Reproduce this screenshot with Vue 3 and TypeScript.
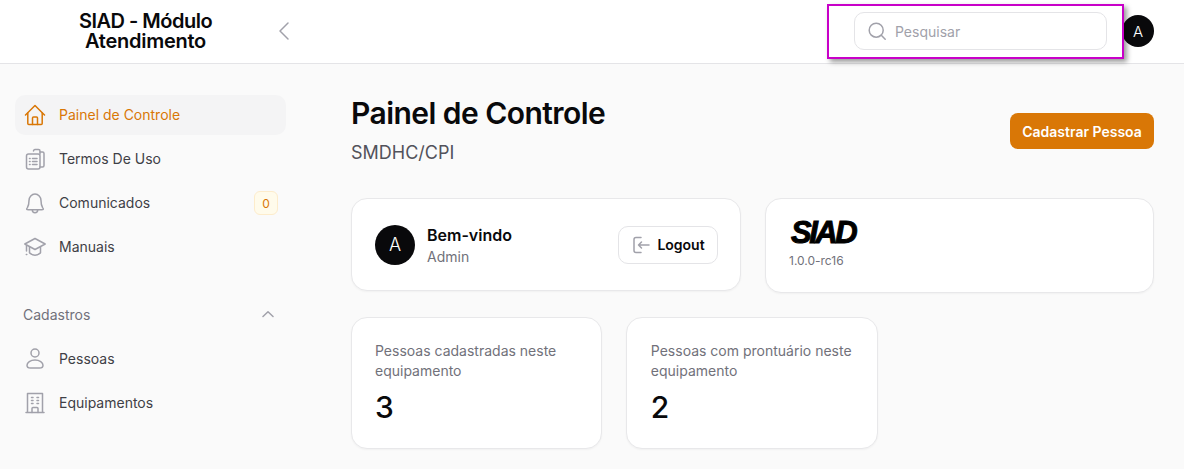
<script setup lang="ts">
interface NavItem { label: string; icon: string; active?: boolean; badge?: string }
const primary: NavItem[] = [
  { label: 'Painel de Controle', icon: 'home', active: true },
  { label: 'Termos De Uso', icon: 'clip' },
  { label: 'Comunicados', icon: 'bell', badge: '0' },
  { label: 'Manuais', icon: 'grad' },
]
const secondary: NavItem[] = [
  { label: 'Pessoas', icon: 'user' },
  { label: 'Equipamentos', icon: 'building' },
]
const stats = [
  { label: 'Pessoas cadastradas neste equipamento', value: '3' },
  { label: 'Pessoas com prontuário neste equipamento', value: '2' },
]
</script>

<template>
  <div class="page">
    <header class="topbar">
      <div class="brand">SIAD - Módulo<br /><span>Atendimento</span></div>
      <svg class="collapse" width="12" height="20" viewBox="0 0 12 20" fill="none"><path d="M10 2 2 10l8 8" stroke="#a1a1aa" stroke-width="1.500" stroke-linecap="round" stroke-linejoin="round" /></svg>
      <div class="top-right">
        <div class="search">
          <svg width="20" height="20" viewBox="0 0 20 20" fill="none"><circle cx="9.200" cy="9.200" r="7" stroke="#a1a1aa" stroke-width="1.500" /><path d="m14.300 14.300 3.900 3.900" stroke="#a1a1aa" stroke-width="1.500" stroke-linecap="round" /></svg>
          <span>Pesquisar</span>
        </div>
        <div class="avatar small">A</div>
      </div>
      <div class="highlight"></div>
    </header>

    <div class="body">
      <aside class="sidebar">
        <nav class="nav">
          <a v-for="item in primary" :key="item.label" class="nav-item" :class="{ active: item.active }">
            <svg class="nav-icon" width="24" height="24" viewBox="0 0 24 24" fill="none" stroke="currentColor" stroke-width="1.500" stroke-linecap="round" stroke-linejoin="round">
              <template v-if="item.icon === 'home'">
                <path d="M2.500 12 12 2.500 21.500 12" />
                <path d="M4.800 10v10.500c0 .6.400 1 1 1h12.400c.6 0 1-.4 1-1V10" />
                <path d="M9.500 21.500v-6.500c0-.6.400-1 1-1h3c.6 0 1 .4 1 1v6.500" />
              </template>
              <template v-else-if="item.icon === 'clip'">
                <path d="M17 5h2.500c.8 0 1.500.7 1.500 1.500v12c0 .8-.7 1.500-1.500 1.500H17" />
                <path d="M10.500 4c0-.8.700-1.500 1.500-1.500h3.500c.8 0 1.500.7 1.500 1.500v3" />
                <rect x="3.500" y="7" width="13.500" height="15" rx="2" />
                <path d="M6.500 11.500h.6M9.500 11.500h4.500M6.500 14.500h.6M9.500 14.500h4.500M6.500 17.500h.6M9.500 17.500h4.500" />
              </template>
              <template v-else-if="item.icon === 'bell'">
                <path d="M18 9.500C18 6 15.300 3 12 3S6 6 6 9.500c0 3.500-.8 5.800-1.600 7.100-.6.800-1 1.400-.7 1.800.2.300 1.100.300 1.800.300h13c.7 0 1.600 0 1.800-.3.300-.4-.1-1-.7-1.800C18.800 15.300 18 13 18 9.500Z" />
                <path d="M9.300 18.800c0 1.700 1.200 3 2.700 3s2.700-1.300 2.700-3" />
              </template>
              <template v-else-if="item.icon === 'grad'">
                <path d="M12 3.500 1.800 9 12 14.500 22.200 9 12 3.500Z" />
                <path d="M6.500 12v5.800c1.800 1.500 3.600 2.400 5.500 2.400s3.700-.9 5.500-2.400V12" />
                <path d="M3.500 10.500V16M3.300 19.500h.5" />
              </template>
              <template v-else>
                <path d="M12 3h0" />
              </template>
            </svg>
            <span class="nav-label">{{ item.label }}</span>
            <span v-if="item.badge" class="badge">{{ item.badge }}</span>
          </a>
        </nav>

        <div class="section-head">
          <span>Cadastros</span>
          <svg width="12" height="8" viewBox="0 0 12 8" fill="none"><path d="M1 5.500 6 .8l5 4.700" stroke="#a1a1aa" stroke-width="1.500" stroke-linecap="round" stroke-linejoin="round" /></svg>
        </div>

        <nav class="nav">
          <a v-for="item in secondary" :key="item.label" class="nav-item">
            <svg class="nav-icon" width="24" height="24" viewBox="0 0 24 24" fill="none" stroke="currentColor" stroke-width="1.500" stroke-linecap="round" stroke-linejoin="round">
              <template v-if="item.icon === 'user'">
                <circle cx="12" cy="6" r="4" />
                <path d="M12 13c-4.600 0-8 2.500-8 5.200 0 1.700 1.500 2.800 3.500 2.800h9c2 0 3.500-1.100 3.500-2.800 0-2.700-3.400-5.200-8-5.200Z" />
              </template>
              <template v-else>
                <path d="M3 21.500h18M4.500 21.500v-19h15v19" />
                <path d="M9 21.500v-4c0-.5.400-1 1-1h4c.6 0 1 .5 1 1v4" />
                <path d="M8.500 6.500h1.500M8.500 9.500h1.500M8.500 12.500h1.500M14 6.500h1.500M14 9.500h1.500M14 12.500h1.500" />
              </template>
            </svg>
            <span class="nav-label">{{ item.label }}</span>
          </a>
        </nav>
      </aside>

      <main class="main">
        <div class="heading">
          <div>
            <h1>Painel de Controle</h1>
            <p>SMDHC/CPI</p>
          </div>
          <button class="primary">Cadastrar Pessoa</button>
        </div>

        <div class="two">
          <section class="card welcome">
            <div class="avatar">A</div>
            <div class="who">
              <strong>Bem-vindo</strong>
              <span>Admin</span>
            </div>
            <button class="logout">
              <svg width="20" height="20" viewBox="0 0 20 20" fill="none" stroke="#a1a1aa" stroke-width="1.500" stroke-linecap="round" stroke-linejoin="round">
                <path d="M10 2.500H5c-1 0-2 .8-2 2v11c0 1 1 2 2 2h5" />
                <path d="M18 10H7.500M10.500 7l-3 3 3 3" />
              </svg>
              Logout
            </button>
          </section>
          <section class="card about">
            <div class="logo">SIAD</div>
            <span>1.0.0-rc16</span>
          </section>
        </div>

        <div class="three">
          <section v-for="s in stats" :key="s.label" class="card stat">
            <p>{{ s.label }}</p>
            <strong>{{ s.value }}</strong>
          </section>
        </div>
      </main>
    </div>
  </div>
</template>

<style>
html, body { margin: 0; background: #fafafa; }
</style>

<style scoped>
.page {
  width: 1184px;
  height: 469px;
  overflow: hidden;
  background: #fafafa;
  font-family: Inter, "Liberation Sans", sans-serif;
  color: #09090b;
}
.topbar {
  position: relative;
  box-sizing: border-box;
  height: 64px;
  display: flex;
  align-items: center;
  background: #fff;
  border-bottom: 1px solid #e4e4e7;
  padding: 0 30px 1px 0;
}
.brand {
  width: 291px;
  text-align: center;
  font-size: 20px;
  line-height: 20px;
  font-weight: 600;
  letter-spacing: -0.5px;
  color: #09090b;
  flex: none;
  padding-bottom: 1px;
}
.brand span { letter-spacing: -0.25px; }
.collapse { margin-left: -13px; flex: none; }
.top-right {
  margin-left: auto;
  display: flex;
  align-items: center;
  gap: 15px;
}
.search {
  width: 251px;
  height: 36px;
  border: 1px solid #e4e4e7;
  border-radius: 10px;
  display: flex;
  align-items: center;
  gap: 8px;
  font-size: 14px;
  color: #a1a1aa;
  background: #fff;
}
.search svg { margin-left: 12px; flex: none; }
.avatar {
  width: 40px;
  height: 40px;
  border-radius: 50%;
  background: #09090b;
  color: #fff;
  display: flex;
  align-items: center;
  justify-content: center;
  font-size: 18px;
  font-weight: 300;
  flex: none;
}
.avatar.small { width: 32px; height: 32px; font-size: 15px; }
.highlight {
  position: absolute;
  left: 827px;
  top: 4px;
  width: 293px;
  height: 51px;
  border: 2px solid #c800c8;
  box-shadow: 3px 3px 5px rgba(0, 0, 0, 0.4);
  pointer-events: none;
}
.body { display: flex; }
.sidebar {
  width: 271px;
  padding: 31px 15px 0;
  flex: none;
}
.nav { display: flex; flex-direction: column; gap: 4px; }
.nav-item {
  height: 40px;
  border-radius: 10px;
  display: flex;
  align-items: center;
  gap: 12px;
  padding: 0 8px;
  font-size: 14px;
  color: #3f3f46;
}
.nav-item .nav-icon { color: #a1a1aa; flex: none; }
.nav-item.active { background: #f4f4f5; color: #d97706; }
.nav-item.active .nav-icon { color: #d97706; }
.nav-label { flex: 1; padding-bottom: 2px; }
.badge {
  width: 24px;
  height: 24px;
  border: 1px solid #fdeccb;
  border-radius: 6px;
  background: #fffbeb;
  color: #d97706;
  font-size: 12px;
  display: flex;
  align-items: center;
  justify-content: center;
  box-sizing: border-box;
}
.section-head {
  margin-top: 28px;
  height: 40px;
  padding: 0 12px 0 8px;
  display: flex;
  align-items: center;
  justify-content: space-between;
  font-size: 14px;
  color: #71717a;
}
.section-head span { padding-bottom: 2px; }
.section-head + .nav { margin-top: 4px; }
.main {
  flex: 1;
  min-width: 0;
  padding: 31px 30px 0 50px;
}
.heading {
  display: flex;
  align-items: center;
  justify-content: space-between;
}
h1 {
  margin: 0;
  font-size: 30px;
  line-height: 36px;
  font-weight: 600;
  letter-spacing: -0.55px;
  color: #09090b;
}
.heading p {
  margin: 8px 0 0;
  font-size: 18px;
  line-height: 28px;
  color: #52525b;
}
.primary {
  width: 144px;
  height: 36px;
  border: 0;
  border-radius: 8px;
  background: #d97706;
  color: #fff;
  font: 600 14px Inter, sans-serif;
}
.card {
  box-sizing: border-box;
  background: #fff;
  border: 1px solid #e8e8ea;
  border-radius: 16px;
  box-shadow: 0 1px 2px rgba(0, 0, 0, 0.04);
}
.two {
  margin: 31px 0 0 -0.5px;
  display: grid;
  grid-template-columns: 390.5px 1fr;
  gap: 23.5px;
  align-items: start;
}
.welcome {
  height: 93px;
  display: flex;
  align-items: center;
  gap: 12px;
  padding: 0 22px 0 23.5px;
}
.who { flex: 1; display: flex; flex-direction: column; }
.who strong { font-size: 16px; line-height: 24px; font-weight: 600; color: #09090b; }
.who span { font-size: 14px; line-height: 20px; color: #71717a; }
.logout {
  width: 100px;
  height: 38px;
  border: 1px solid #e4e4e7;
  border-radius: 10px;
  background: #fff;
  display: flex;
  align-items: center;
  justify-content: center;
  gap: 6px;
  font: 600 14px Inter, sans-serif;
  color: #09090b;
  padding: 0;
}
.about {
  height: 95px;
  padding: 19px 23.5px;
  display: flex;
  flex-direction: column;
}
.logo {
  font: italic 700 31px/30px "Liberation Sans", sans-serif;
  letter-spacing: -2.5px;
  -webkit-text-stroke: 1px #000;
  color: #000;
  padding-left: 2px;
}
.about span { margin-top: 4px; font-size: 12px; line-height: 18px; color: #71717a; }
.three {
  margin: 24px 0 0 -0.5px;
  display: grid;
  grid-template-columns: repeat(3, 1fr);
  gap: 24px;
}
.stat {
  height: 132px;
  padding: 23px 23.5px;
  display: flex;
  flex-direction: column;
}
.stat p {
  margin: 0;
  font-size: 14px;
  line-height: 20px;
  color: #71717a;
}
.stat strong {
  margin-top: 7px;
  font-size: 30px;
  line-height: 38px;
  font-weight: 500;
  color: #09090b;
}
</style>
